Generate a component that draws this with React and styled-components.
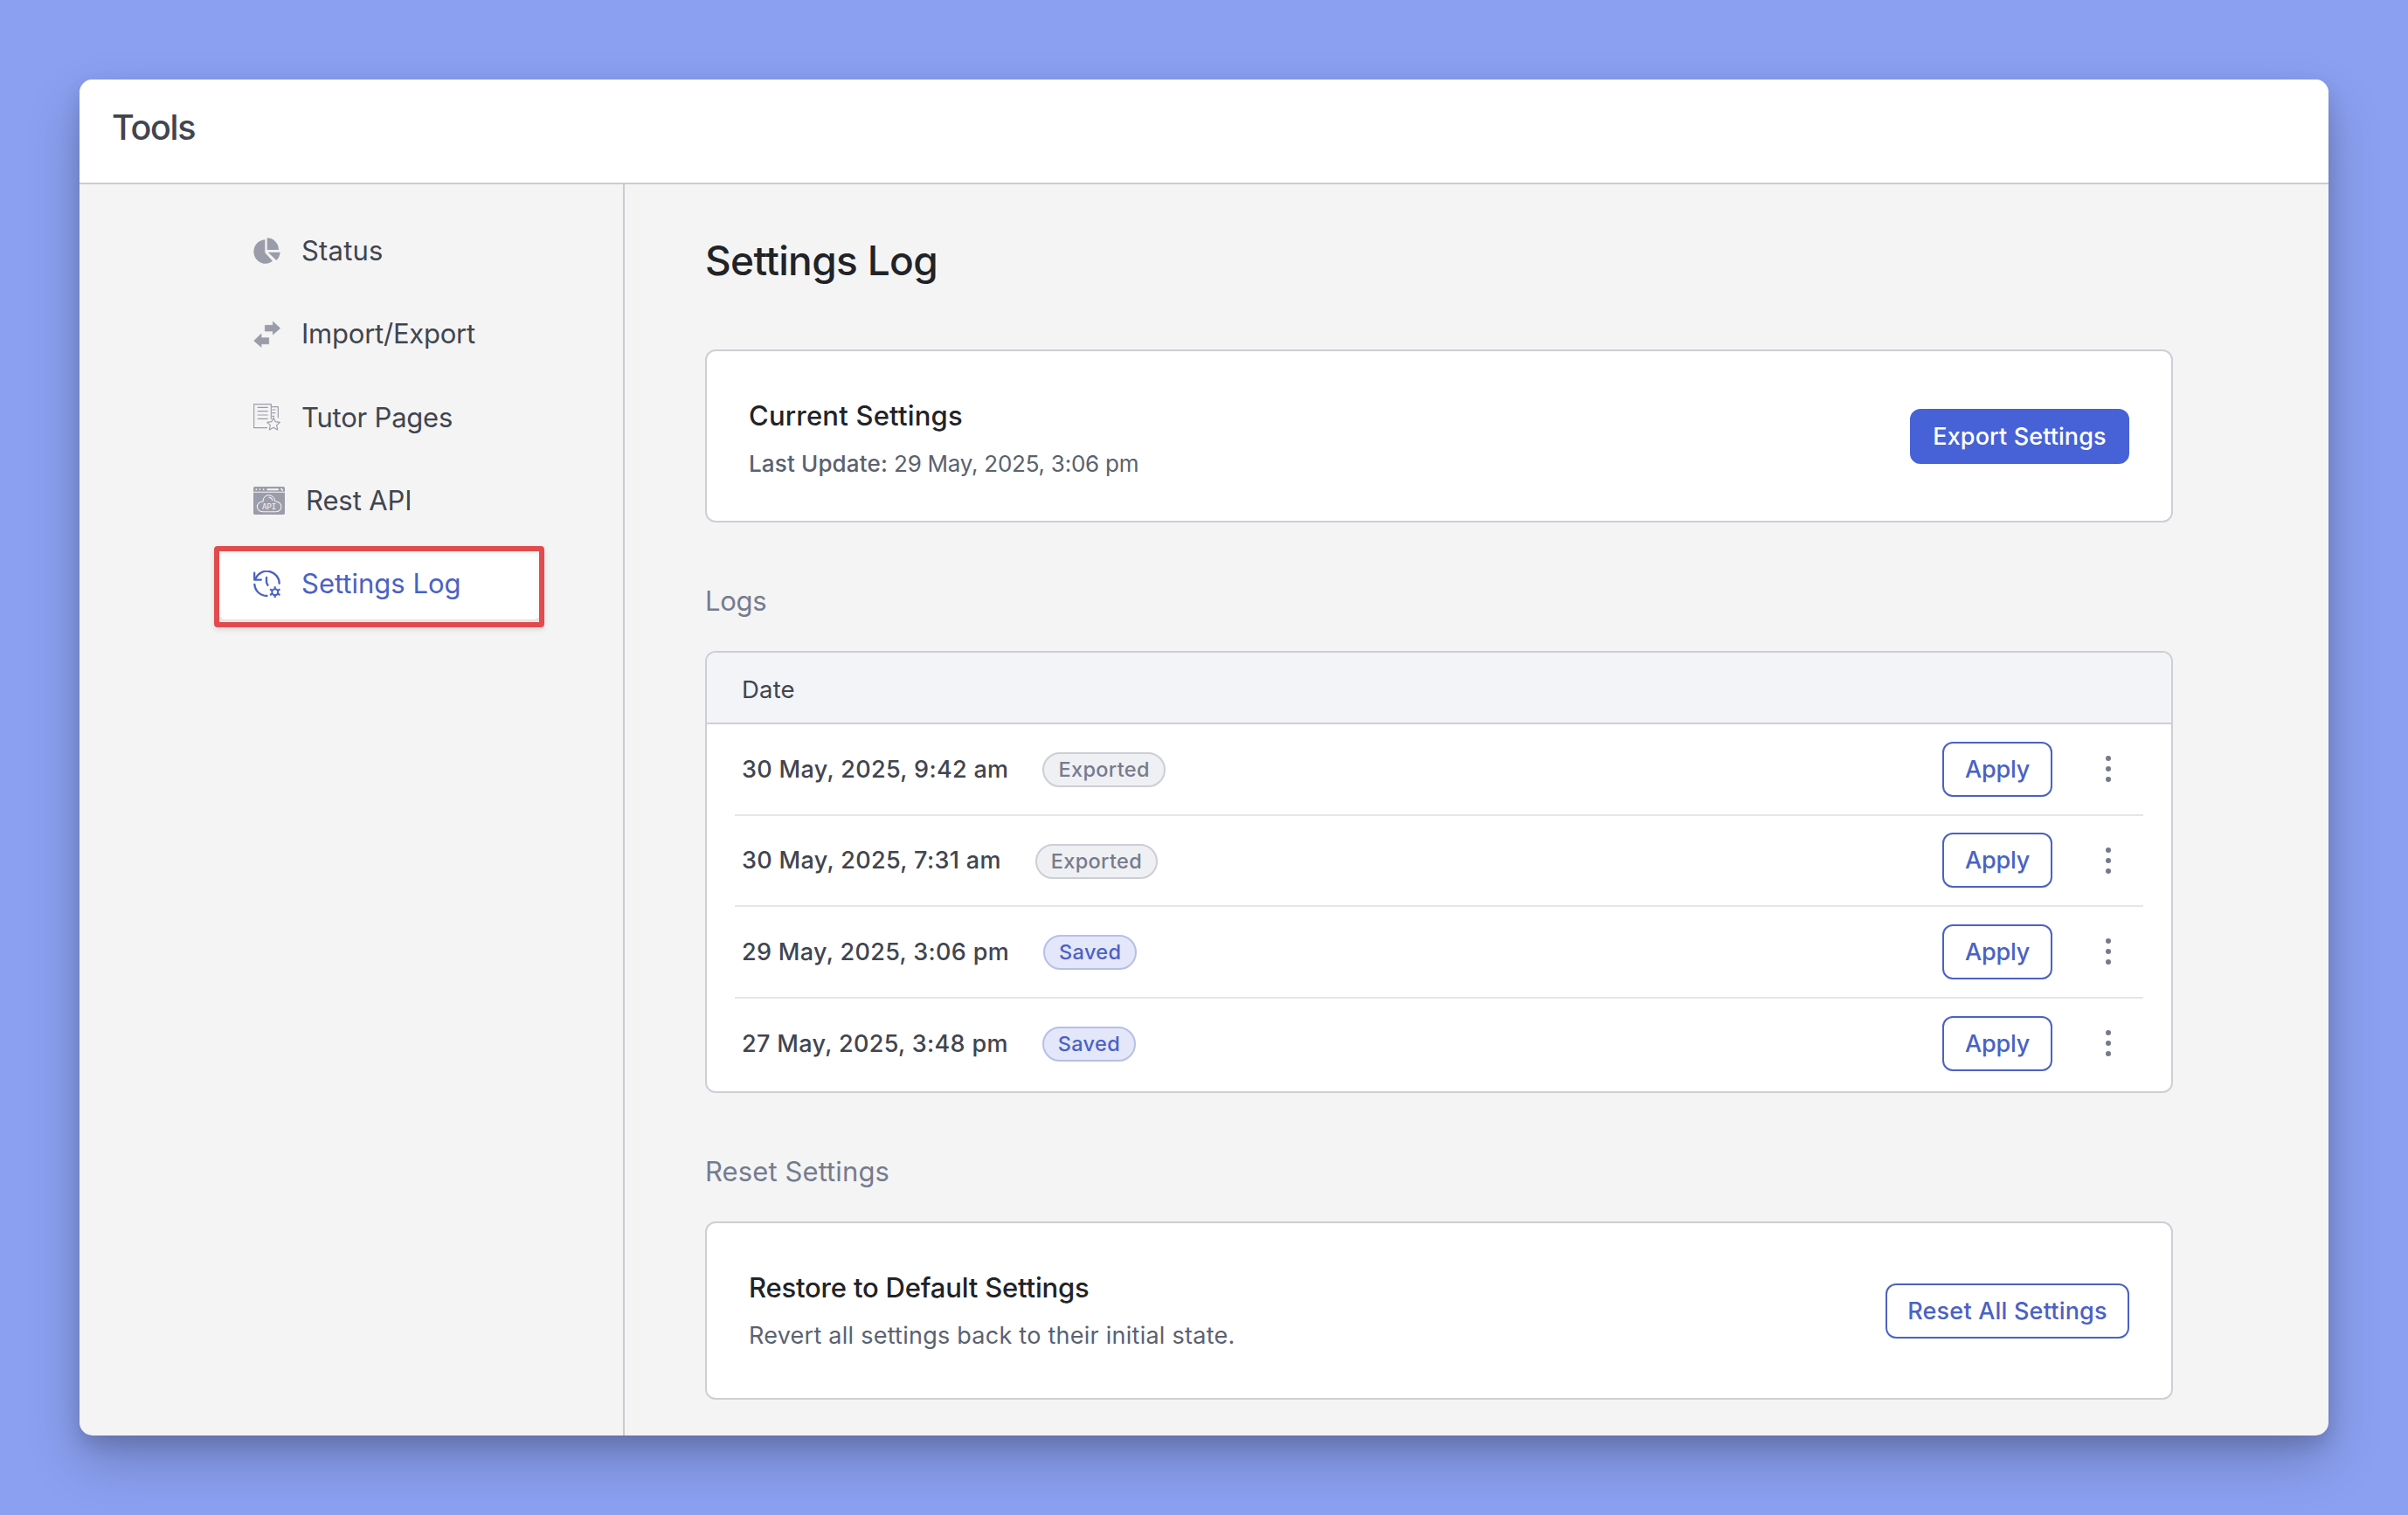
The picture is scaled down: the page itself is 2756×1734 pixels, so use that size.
import React, { Component } from 'react';
import styled, { createGlobalStyle } from 'styled-components';

const GlobalStyle = createGlobalStyle`
  :root {
    --page-color: #8ba0f1;
    --surface-color: #f4f4f5;
    --border-color: #cdcfd5;
    --title-color: #212327;
    --text-color: #41454f;
    --subdued-color: #5b616f;
    --hint-color: #757c8e;
    --icon-color: #9b9ca9;
    --primary-color: #4762d7;
    --link-color: #4a62c4;
  }

  *, *::before, *::after {
    box-sizing: border-box;
  }

  body {
    margin: 0;
    background-color: var(--page-color);
    font-family: Inter, "Liberation Sans", sans-serif;
    color: var(--text-color);
  }
`;

const Page = styled.div`
  width: 2756px;
  height: 1734px;
  padding: 91px;
`;

const Window = styled.div`
  display: flex;
  flex-direction: column;
  height: 1552px;
  overflow: hidden;
  border-radius: 15px;
  background-color: var(--surface-color);
  box-shadow: 0 28px 60px rgba(0, 0, 0, 0.22), 0 10px 22px rgba(0, 0, 0, 0.13);
`;

const Header = styled.header`
  flex: none;
  height: 120px;
  padding: 34px 37px 0;
  background-color: #fff;
  border-bottom: 2px solid #cbcbcf;
`;

const HeaderTitle = styled.h1`
  margin: 0;
  font-size: 39.5px;
  font-weight: 500;
  line-height: 42px;
  letter-spacing: -1.3px;
`;

const Body = styled.div`
  flex: 1;
  display: flex;
  min-height: 0;
`;

const Sidebar = styled.nav`
  flex: none;
  display: flex;
  flex-direction: column;
  gap: 13.3px;
  width: 624px;
  padding: 35px 92px 0 158px;
  border-right: 2px solid #cbcbcf;
`;

const NavItem = styled.a`
  position: relative;
  display: flex;
  align-items: center;
  gap: 24.5px;
  height: 82px;
  padding-left: 40.5px;
  border-radius: 10px;
  font-size: 31px;
  line-height: 40px;
  letter-spacing: ${props => props.$tracking || 0}px;
  color: ${props => (props.$active ? 'var(--link-color)' : 'var(--text-color)')};
  background-color: ${props => (props.$active ? '#fff' : 'transparent')};
  box-shadow: ${props => (props.$active ? '0 2px 3px rgba(0, 0, 0, 0.08)' : 'none')};

  svg {
    flex: none;
    color: ${props => (props.$active ? 'var(--link-color)' : 'var(--icon-color)')};
  }
`;

/* red frame laid over the active menu item */
const Highlight = styled.span`
  position: absolute;
  top: -2px;
  left: -4px;
  width: 378px;
  height: 93px;
  border: 6px solid #e14b4d;
  border-radius: 4px;
  box-shadow: 0 3px 6px rgba(0, 0, 0, 0.1), inset 0 3px 6px rgba(0, 0, 0, 0.06);
`;

const Main = styled.main`
  flex: 1;
  width: 1772px;
  padding: 57px 178px 0 92px;
`;

const MainTitle = styled.h2`
  margin: 0 0 72px;
  font-size: 46px;
  font-weight: 500;
  line-height: 60px;
  letter-spacing: -0.65px;
  color: var(--title-color);
`;

const SectionTitle = styled.h3`
  margin: 70px 0 37px;
  font-size: 31px;
  font-weight: 400;
  line-height: 40px;
  letter-spacing: ${props => props.$tracking || 0}px;
  color: var(--hint-color);
`;

const Card = styled.section`
  display: flex;
  align-items: center;
  justify-content: space-between;
  height: ${props => props.$height}px;
  padding: 0 48px;
  background-color: #fff;
  border: 2px solid var(--border-color);
  border-radius: 12px;
`;

const CardText = styled.div`
  align-self: flex-start;
  padding-top: 52px;
`;

const CardTitle = styled.div`
  font-size: 31px;
  font-weight: 500;
  line-height: 44px;
  letter-spacing: ${props => props.$tracking}px;
  color: var(--title-color);
`;

const CardInfo = styled.div`
  margin-top: 16px;
  font-size: ${props => props.$size}px;
  line-height: 34px;
  letter-spacing: ${props => props.$tracking}px;
  color: var(--subdued-color);

  strong {
    font-weight: 500;
    letter-spacing: 0.15px;
  }
`;

const Button = styled.button`
  height: 63px;
  width: ${props => props.$width}px;
  padding: 0;
  border: 2px solid ${props => (props.$primary ? 'var(--primary-color)' : 'var(--link-color)')};
  border-radius: 12px;
  background-color: ${props => (props.$primary ? 'var(--primary-color)' : '#fff')};
  color: ${props => (props.$primary ? '#fff' : 'var(--link-color)')};
  font-family: inherit;
  font-size: 27px;
  font-weight: ${props => (props.$primary ? 500 : 450)};
  letter-spacing: ${props => props.$tracking || 0}px;
`;

const Table = styled.section`
  height: 506px;
  overflow: hidden;
  background-color: #fff;
  border: 2px solid var(--border-color);
  border-radius: 12px;
`;

const TableHead = styled.div`
  height: 82px;
  padding: 2px 41px 0 40px;
  border-bottom: 2px solid var(--border-color);
  background-color: #f3f4f8;
  font-size: 27.5px;
  line-height: 80px;
  letter-spacing: 0.2px;
`;

const Row = styled.div`
  display: flex;
  align-items: center;
  height: 104.6px;
  margin: 0 32px;
  padding: 0 37px 0 8px;
  border-bottom: 2px solid #e5e6ea;

  &:last-child {
    border-bottom-color: transparent;
  }
`;

const RowDate = styled.div`
  font-size: 27px;
  font-weight: 500;
  letter-spacing: 0.33px;
`;

const Badge = styled.span`
  height: 40px;
  margin: 2px auto 0 39px;
  padding: 0 16px;
  border: 2px solid ${props => (props.$saved ? '#b6bfe6' : '#cdced5')};
  border-radius: 20px;
  background-color: ${props => (props.$saved ? '#e3e7f9' : '#eff0f4')};
  color: ${props => (props.$saved ? 'var(--link-color)' : 'var(--hint-color)')};
  font-size: 23.5px;
  font-weight: 500;
  line-height: 36px;
  letter-spacing: 0.35px;
`;

const Dots = styled.div`
  display: flex;
  flex-direction: column;
  gap: 6px;
  margin-left: 61px;

  i {
    width: 6px;
    height: 6px;
    border-radius: 50%;
    background-color: #757a88;
  }
`;

const StatusIcon = () => (
  <svg width="31" height="30" viewBox="58 65 93 90" fill="currentColor">
    <path d="M98 72 V117 L124 145 A40 41 0 1 1 98 72Z" />
    <path d="M105 66 A41 41 0 0 1 145 107 H105Z" />
    <path d="M108 115 H150 Q149 131 137 143Z" />
  </svg>
);

const TransferIcon = () => (
  <svg width="31" height="31" viewBox="59 49 93 93" fill="currentColor" stroke="currentColor" strokeWidth="2" strokeLinejoin="round">
    <path d="M99 65 H126 V52 L151 75 L126 97 V85 H99Z" />
    <path d="M112 108 H86 V94 L61 118 L86 140 V129 H112Z" />
  </svg>
);

const PagesIcon = () => (
  <svg width="31" height="31" viewBox="58 335 93 93" fill="none" stroke="currentColor" strokeWidth="3.4" strokeLinejoin="round">
    <path d="M119 388 V337 H60 V418 H106" />
    <path d="M119 346 H143 V384" />
    <path d="M72 348 H108 M72 361 H108 M72 374 H108 M72 387 H108 M122 356 H134 M122 367 H134 M122 378 H130" />
    <path d="M127 383 L133.500 397 L149 399 L138 409 L141 425 L127 417 L113 425 L116 409 L105 399 L120.500 397Z" />
  </svg>
);

const ApiIcon = () => (
  <svg width="36" height="32" viewBox="57 618 108 96">
    <rect x="57" y="618" width="108" height="96" rx="5" fill="currentColor" />
    <g stroke="#f4f4f5" fill="none" strokeWidth="3.2" strokeLinecap="round">
      <path d="M57 637 H165" strokeLinecap="butt" />
      <path d="M67 627 V628 M79 627 V628 M92 627 V628 M153 626 L157 630" strokeWidth="5" />
      <path d="M106 628 H141" strokeWidth="6" />
      <path d="M90 704 C63 704 64 670 90 669 C91 640 128 640 132 669 C158 668 160 704 134 704Z" />
      <path d="M111 655 Q120 656 123 665" />
    </g>
    <text x="111" y="696" textAnchor="middle" fill="#f4f4f5" fontFamily="DejaVu Sans Mono, monospace" fontSize="28" textLength="48">API</text>
  </svg>
);

const HistoryIcon = () => (
  <svg width="31" height="31" viewBox="59 65 94 94" fill="none" stroke="currentColor" strokeWidth="7" strokeLinecap="round" strokeLinejoin="round">
    <path d="M62.500 73 V97 H86" />
    <path d="M67 92 A43 43 0 0 1 149 110" />
    <path d="M63 113 A43 43 0 0 0 106 153" />
    <path d="M104.500 89 V107 L109 116" />
    <circle cx="134" cy="140" r="10.500" strokeWidth="6" />
    <g strokeWidth="6.500" strokeLinecap="butt">
      <path d="M134 120 V128 M134 152 V160 M116.700 130 L123.600 134 M144.400 146 L151.300 150 M116.700 150 L123.600 146 M144.400 134 L151.300 130" />
    </g>
  </svg>
);

const menu = [
  { label: 'Status', icon: StatusIcon, tracking: 0.19 },
  { label: 'Import/Export', icon: TransferIcon, tracking: -0.23 },
  { label: 'Tutor Pages', icon: PagesIcon, tracking: -0.22 },
  { label: 'Rest API', icon: ApiIcon, tracking: -0.1 },
  { label: 'Settings Log', icon: HistoryIcon, tracking: 0 },
];

const logs = [
  { date: '30 May, 2025, 9:42 am', status: 'Exported' },
  { date: '30 May, 2025, 7:31 am', status: 'Exported' },
  { date: '29 May, 2025, 3:06 pm', status: 'Saved' },
  { date: '27 May, 2025, 3:48 pm', status: 'Saved' },
];

class LogRow extends Component {
  render() {
    const { date, status } = this.props;

    return (
      <Row>
        <RowDate>{ date }</RowDate>
        <Badge $saved={ status === 'Saved' }>{ status }</Badge>
        <Button $width={ 126 } $tracking={ -0.2 }>Apply</Button>
        <Dots><i /><i /><i /></Dots>
      </Row>
    );
  }
}

class App extends Component {
  constructor() {
    super();

    this.state = {
      current: 'Settings Log',
    };
  }

  render() {
    const { current } = this.state;

    return (
      <Page>
        <GlobalStyle />
        <Window>
          <Header>
            <HeaderTitle>Tools</HeaderTitle>
          </Header>
          <Body>
            <Sidebar>
              { menu.map(({ label, icon: Icon, tracking }) => (
                <NavItem key={ label } $active={ label === current } $tracking={ tracking }>
                  <Icon />
                  { label }
                  { label === current && <Highlight /> }
                </NavItem>
              )) }
            </Sidebar>
            <Main>
              <MainTitle>{ current }</MainTitle>
              <Card $height={ 198 }>
                <CardText>
                  <CardTitle $tracking={ 0.2 }>Current Settings</CardTitle>
                  <CardInfo $size={ 26 } $tracking={ -0.25 }>
                    <strong>Last Update:</strong> 29 May, 2025, 3:06 pm
                  </CardInfo>
                </CardText>
                <Button $primary $width={ 251 } $tracking={ 0.1 }>Export Settings</Button>
              </Card>
              <SectionTitle $tracking={ -0.3 }>Logs</SectionTitle>
              <Table>
                <TableHead>Date</TableHead>
                { logs.map(log => <LogRow key={ log.date } { ...log } />) }
              </Table>
              <SectionTitle $tracking={ 0.1 }>Reset Settings</SectionTitle>
              <Card $height={ 204 }>
                <CardText>
                  <CardTitle $tracking={ -0.19 }>Restore to Default Settings</CardTitle>
                  <CardInfo $size={ 27 } $tracking={ 0.25 }>Revert all settings back to their initial state.</CardInfo>
                </CardText>
                <Button $width={ 279 } $tracking={ 0.2 }>Reset All Settings</Button>
              </Card>
            </Main>
          </Body>
        </Window>
      </Page>
    );
  }
}

export default App;
